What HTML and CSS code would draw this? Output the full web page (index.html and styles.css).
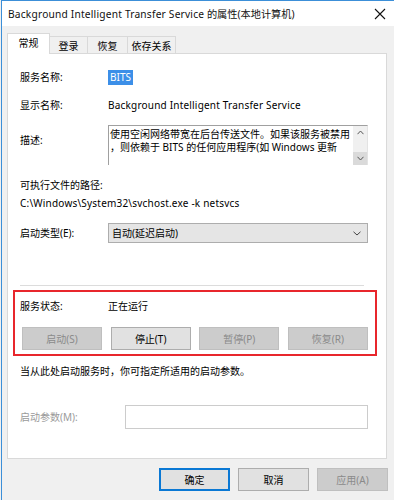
FILE: index.html
```html
<!DOCTYPE html>
<html lang="zh-CN">
<head>
<meta charset="utf-8">
<title>BITS 的属性</title>
<link rel="stylesheet" href="styles.css">
</head>
<body>
<div class="window">
  <div class="titlebar">
    <span class="title"><span class="latin">Background Intelligent Transfer Service</span> 的属性(本地计算机)</span>
    <svg class="close" width="12" height="12" viewBox="0 0 12 12"><path d="M1 1L11 11M11 1L1 11" stroke="#111" stroke-width="1.1" fill="none"/></svg>
  </div>
  <div class="tabs">
    <div class="tab active">常规</div>
    <div class="tab">登录</div>
    <div class="tab">恢复</div>
    <div class="tab">依存关系</div>
  </div>
  <div class="panel">
    <div class="row r1"><span class="label">服务名称:</span><span class="selected">BITS</span></div>
    <div class="row r2"><span class="label">显示名称:</span><span class="value latin">Background Intelligent Transfer Service</span></div>
    <div class="row r3">
      <span class="label desc-label">描述:</span>
      <div class="textbox">
        <div class="textbox-text">
          <div>使用空闲网络带宽在后台传送文件。如果该服务被禁用</div>
          <div>，则依赖于 BITS 的任何应用程序(如 Windows 更新</div>
        </div>
        <div class="scrollbar">
          <span class="arrow up"><svg width="7" height="5" viewBox="0 0 7 5"><path d="M0.5 4.2L3.5 1L6.5 4.2" stroke="#555" fill="none"/></svg></span>
          <span class="arrow down"><svg width="7" height="5" viewBox="0 0 7 5"><path d="M0.5 0.8L3.5 4L6.5 0.8" stroke="#555" fill="none"/></svg></span>
        </div>
      </div>
    </div>
    <div class="row r4">可执行文件的路径:</div>
    <div class="row r5 latin">C:\Windows\System32\svchost.exe -k netsvcs</div>
    <div class="row r6">
      <span class="label">启动类型(E):</span>
      <div class="select"><span>自动(延迟启动)</span><svg width="8" height="5" viewBox="0 0 8 5"><path d="M0.5 0.8L4 4L7.5 0.8" stroke="#444" fill="none"/></svg></div>
    </div>
    <div class="separator"></div>
    <div class="highlight-box">
      <div class="row status"><span class="label">服务状态:</span><span class="value">正在运行</span></div>
      <div class="buttons">
        <div class="btn disabled">启动(S)</div>
        <div class="btn">停止(T)</div>
        <div class="btn disabled">暂停(P)</div>
        <div class="btn disabled">恢复(R)</div>
      </div>
    </div>
    <div class="row hint">当从此处启动服务时，你可指定所适用的启动参数。</div>
    <div class="row params">
      <span class="label wide muted">启动参数(M):</span>
      <div class="input"></div>
    </div>
  </div>
  <div class="footer">
    <div class="btn dlg primary">确定</div>
    <div class="btn dlg">取消</div>
    <div class="btn dlg disabled">应用(A)</div>
  </div>
</div>
</body>
</html>
```

FILE: styles.css
```css
html, body {
  margin: 0;
  padding: 0;
}
body {
  width: 394px;
  height: 500px;
  overflow: hidden;
  background: #f0f0f0;
  font-family: "Noto Sans", "Noto Sans CJK SC", sans-serif;
  font-size: 10px;
  color: #000;
}
.latin {
  letter-spacing: 0.2px;
}
.window {
  height: 500px;
  box-sizing: border-box;
  margin-left: 1px;
  border-left: 1px solid #3c8fd8;
  border-top: 1px solid #3c8fd8;
  background: #f0f0f0;
}
.titlebar {
  height: 25px;
  background: #fff;
  display: flex;
  align-items: center;
  justify-content: space-between;
  padding: 0 7px 0 6px;
  font-size: 10.2px;
}
.title {
  color: #111;
}
.close {
  margin-right: 1px;
}
.tabs {
  display: flex;
  align-items: flex-end;
  height: 20px;
  margin-top: 7px;
  padding-left: 5px;
  position: relative;
  z-index: 1;
}
.tab {
  box-sizing: border-box;
  height: 17px;
  border: 1px solid #d9d9d9;
  border-bottom: none;
  margin-left: -1px;
  display: flex;
  align-items: center;
  justify-content: center;
  background: #f0f0f0;
  line-height: 1;
  padding-top: 1px;
}
.tab:nth-child(1) { width: 43px; margin-left: 0; }
.tab:nth-child(2) { width: 39px; }
.tab:nth-child(3) { width: 41px; }
.tab:nth-child(4) { width: 49px; }
.tab.active {
  height: 21px;
  background: #fff;
  margin-bottom: -1px;
  padding-top: 0;
  padding-bottom: 2px;
}
.panel {
  box-sizing: border-box;
  margin-left: 5px;
  width: 380px;
  height: 406px;
  background: #fff;
  border: 1px solid #d9d9d9;
  padding: 0 18px 0 12px;
  display: flex;
  flex-direction: column;
}
.row {
  display: flex;
  align-items: center;
  line-height: 16px;
  min-height: 16px;
}
.label {
  width: 88px;
  flex: none;
}
.label.wide {
  width: 105px;
}
.muted {
  color: #9a9a9a;
}
.r1 { margin-top: 15px; }
.r2 { margin-top: 12px; }
.r3 { margin-top: 12px; align-items: flex-start; }
.r4 { margin-top: 12px; }
.r5 { margin-top: 2px; }
.r6 { margin-top: 12px; }
.selected {
  background: #3c8fe8;
  color: #fff;
  padding: 0 2px;
  line-height: 15px;
}
.desc-label {
  margin-top: 7px;
}
.textbox {
  flex: 1;
  height: 40px;
  box-sizing: border-box;
  border-top: 1px solid #a0a0a0;
  border-left: 1px solid #a0a0a0;
  border-right: 1px solid #e3e3e3;
  display: flex;
  overflow: hidden;
}
.textbox-text {
  flex: 1;
  padding: 2px 0 0 1px;
  line-height: 13px;
  overflow: hidden;
  white-space: nowrap;
}
.scrollbar {
  width: 14px;
  background: #f0f0f0;
  display: flex;
  flex-direction: column;
  justify-content: space-between;
}
.arrow {
  height: 13px;
  display: flex;
  align-items: center;
  justify-content: center;
}
.arrow.down {
  background: #dadada;
}
.select {
  flex: 1;
  box-sizing: border-box;
  height: 20px;
  background: #e5e5e5;
  border: 1px solid #adadad;
  display: flex;
  align-items: center;
  justify-content: space-between;
  padding: 0 6px 0 3px;
}
.separator {
  margin-top: 42px;
  height: 1px;
  background: #dcdcdc;
  margin-right: 4px;
}
.highlight-box {
  margin: 4px -9px 0 -7px;
  height: 66px;
  box-sizing: border-box;
  border: 2px solid #e8262c;
  padding: 6px 7px 0 5px;
}
.buttons {
  display: flex;
  justify-content: space-between;
  margin-top: 13px;
  padding-left: 2px;
}
.btn {
  box-sizing: border-box;
  width: 80px;
  height: 23px;
  background: #e1e1e1;
  border: 1px solid #adadad;
  display: flex;
  align-items: center;
  justify-content: center;
  color: #000;
}
.btn.disabled {
  background: #cccccc;
  border-color: #bfbfbf;
  color: #8a8a8a;
}
.hint {
  margin-top: 7px;
}
.params {
  margin-top: 26px;
}
.input {
  flex: 1;
  height: 24px;
  box-sizing: border-box;
  border: 1px solid #cccccc;
  background: #fff;
}
.footer {
  display: flex;
  justify-content: flex-end;
  gap: 8px;
  padding: 9px 6px 0 0;
}
.btn.dlg {
  width: 71px;
}
.btn.primary {
  border: 2px solid #0a78d4;
}
```
